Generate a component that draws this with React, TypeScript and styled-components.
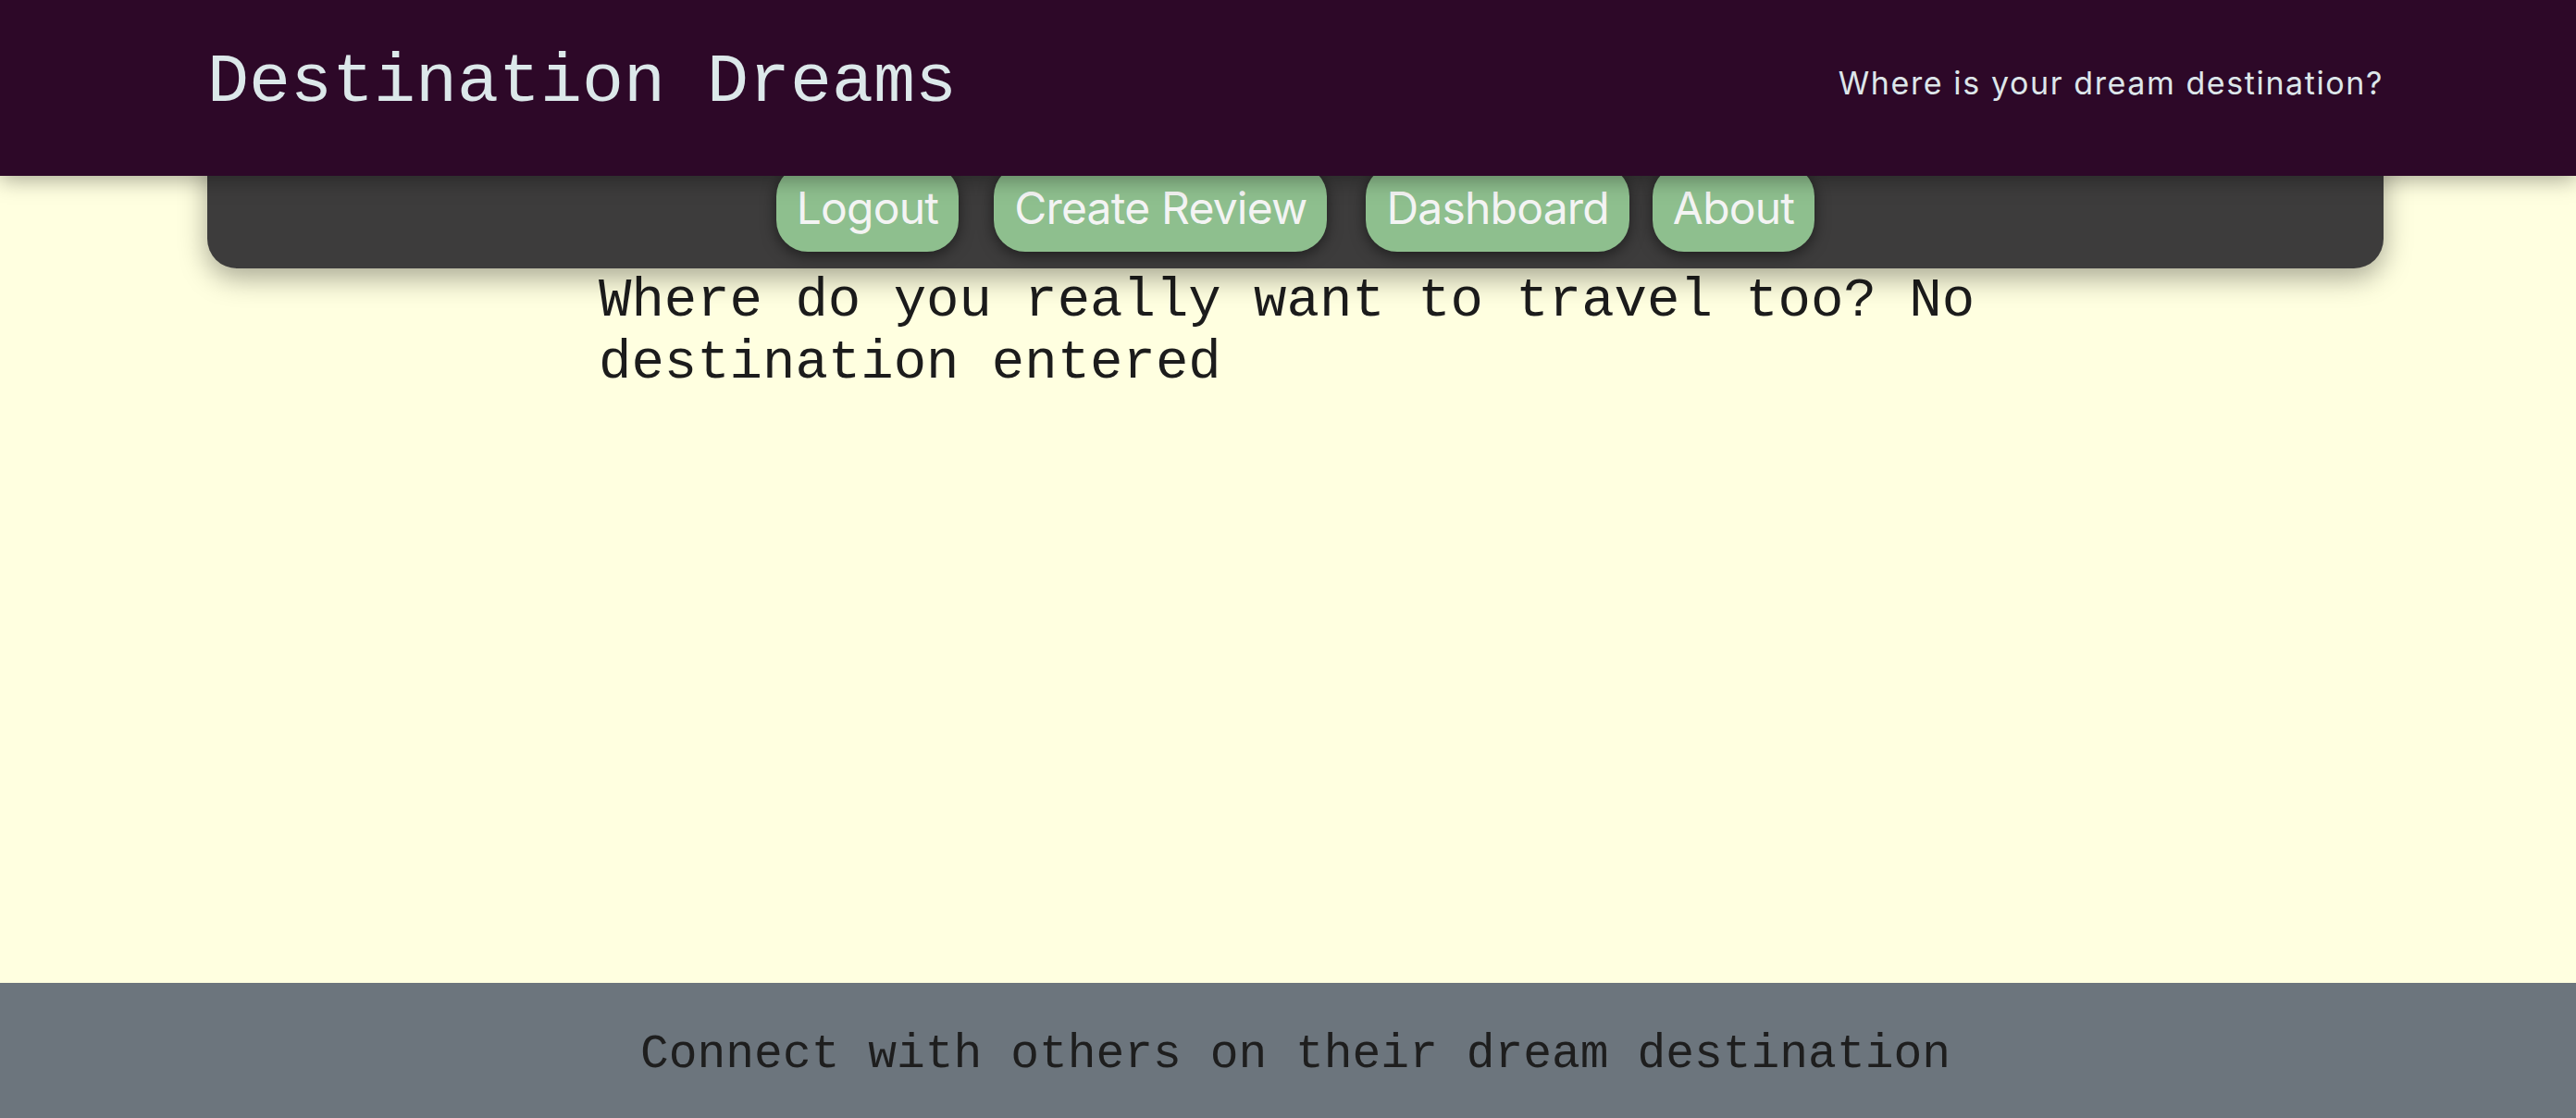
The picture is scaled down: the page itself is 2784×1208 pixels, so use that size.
import React from "react";
import styled, { createGlobalStyle } from "styled-components";

const GlobalStyle = createGlobalStyle`
  html, body {
    margin: 0;
    padding: 0;
  }
  body {
    background: #ffffe0;
    font-family: "Liberation Mono", "Courier New", monospace;
  }
  * { box-sizing: border-box; }
`;

const Page = styled.div`
  min-height: 100vh;
  display: flex;
  flex-direction: column;
`;

const Header = styled.header`
  position: relative;
  z-index: 2;
  height: 190px;
  background: #2d0828;
  box-shadow: 0 4px 22px rgba(0, 0, 0, 0.35);
  display: flex;
  align-items: center;
  justify-content: space-between;
  padding: 0 208px 12px 224px;
`;

const Title = styled.h1`
  margin: 0;
  font-family: "Liberation Mono", "Courier New", monospace;
  font-weight: 400;
  font-size: 75px;
  color: #dce8ea;
`;

const Tagline = styled.p`
  margin: 0;
  font-family: Inter, "Noto Sans", sans-serif;
  font-size: 34px;
  letter-spacing: 1.6px;
  color: #dde6ea;
`;

const Column = styled.div`
  flex: 1;
  display: flex;
  flex-direction: column;
  margin: -30px 208px 0 224px;
`;

const Nav = styled.nav`
  position: relative;
  z-index: 1;
  display: flex;
  justify-content: center;
  padding: 18px 0;
  background: #3d3c3c;
  border-radius: 0 0 32px 32px;
  box-shadow: 0 10px 30px rgba(0, 0, 0, 0.35);
`;

const NavButton = styled.a<{ $gap: number }>`
  margin-left: ${(p) => p.$gap}px;
  padding: 18px 22px;
  background: #8ebf8e;
  color: #f4f4f4;
  font-family: Inter, "Noto Sans", sans-serif;
  font-size: 48px;
  letter-spacing: -0.8px;
  line-height: 58px;
  border-radius: 34px;
  text-decoration: none;
  box-shadow: 0 4px 16px rgba(0, 0, 0, 0.5);
  cursor: pointer;
`;

const Main = styled.main`
  width: 1506px;
  margin: 2px auto 0;
`;

const Prompt = styled.p`
  margin: 0;
  font-family: "Liberation Mono", "Courier New", monospace;
  font-size: 59px;
  color: #1c1c1c;
`;

const Footer = styled.footer`
  height: 146px;
  background: #6c757d;
  display: flex;
  align-items: center;
  justify-content: center;
  padding: 8px 208px 0 224px;
`;

const FooterText = styled.p`
  margin: 0;
  font-family: "Liberation Mono", "Courier New", monospace;
  font-size: 51.3px;
  color: #1e1e1e;
`;

const links = [
  { label: "Logout", gap: 0 },
  { label: "Create Review", gap: 38 },
  { label: "Dashboard", gap: 42 },
  { label: "About", gap: 25 },
];

export default function App() {
  return (
    <Page>
      <GlobalStyle />
      <Header>
        <Title>Destination Dreams</Title>
        <Tagline>Where is your dream destination?</Tagline>
      </Header>
      <Column>
        <Nav>
          {links.map((l) => (
            <NavButton key={l.label} $gap={l.gap}>
              {l.label}
            </NavButton>
          ))}
        </Nav>
        <Main>
          <Prompt>Where do you really want to travel too? No destination entered</Prompt>
        </Main>
      </Column>
      <Footer>
        <FooterText>Connect with others on their dream destination</FooterText>
      </Footer>
    </Page>
  );
}
